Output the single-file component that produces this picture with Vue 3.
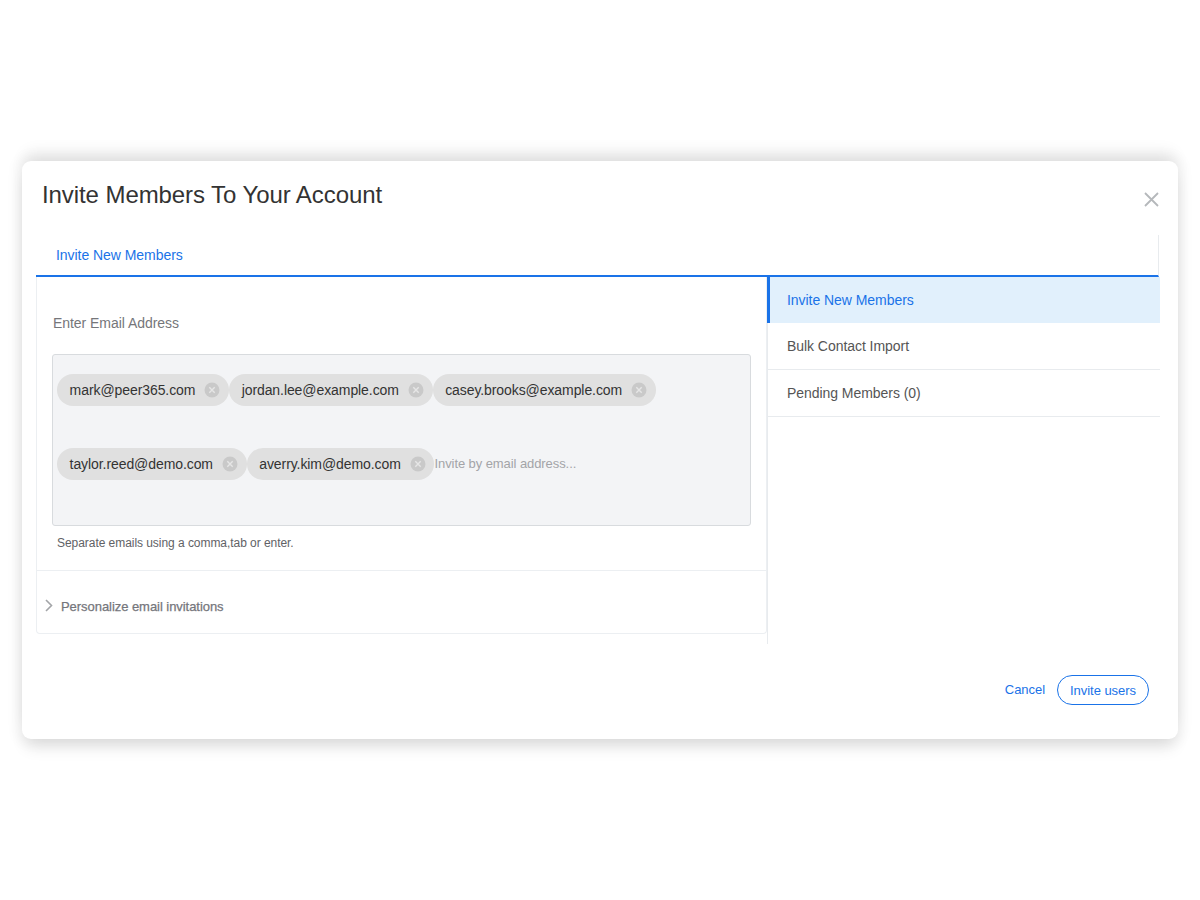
<script setup>
const emails = ['mark@peer365.com', 'jordan.lee@example.com', 'casey.brooks@example.com', 'taylor.reed@demo.com', 'averry.kim@demo.com']
const menu = [
  { label: 'Invite New Members', active: true },
  { label: 'Bulk Contact Import', active: false },
  { label: 'Pending Members (0)', active: false }
]
</script>

<template>
  <div class="page">
    <section class="modal">
      <header class="head">
        <h1 class="title">Invite Members To Your Account</h1>
        <svg class="close" width="15" height="15" viewBox="0 0 15 15" aria-hidden="true">
          <path d="M1 1 L14 14 M14 1 L1 14" fill="none" stroke="#b5b8bb" stroke-width="1.8" />
        </svg>
      </header>

      <div class="tabs">
        <span class="tab">Invite New Members</span>
      </div>

      <div class="columns">
        <div class="left">
          <div class="form">
            <div class="label">Enter Email Address</div>
            <div class="box">
              <span v-for="e in emails" :key="e" class="chip">
                <span class="chip-text">{{ e }}</span>
                <svg class="chip-x" width="16" height="16" viewBox="0 0 16 16" aria-hidden="true">
                  <circle cx="8" cy="8" r="7.5" fill="#c9c9c9" />
                  <path d="M5.3 5.3 L10.7 10.7 M10.7 5.3 L5.3 10.7" stroke="#e6e6e6" stroke-width="1.4" fill="none" />
                </svg>
              </span>
              <span class="placeholder">Invite by email address...</span>
            </div>
            <div class="hint">Separate emails using a comma,tab or enter.</div>
          </div>
          <div class="personalize">
            <svg class="chev" width="8" height="13" viewBox="0 0 8 13" aria-hidden="true">
              <path d="M1 1 L6.5 6.5 L1 12" fill="none" stroke="#a3a5a8" stroke-width="1.6" />
            </svg>
            <span>Personalize email invitations</span>
          </div>
        </div>

        <nav class="side">
          <div v-for="m in menu" :key="m.label" class="item" :class="{ active: m.active }">{{ m.label }}</div>
        </nav>
      </div>

      <footer class="foot">
        <span class="cancel">Cancel</span>
        <span class="invite">Invite users</span>
      </footer>
    </section>
  </div>
</template>

<style>
html, body { margin: 0; background: #fff; }
</style>

<style scoped>
.page {
  width: 1200px;
  height: 900px;
  padding: 161px 22px;
  box-sizing: border-box;
  font-family: "Liberation Sans", Arial, sans-serif;
  letter-spacing: -0.05px;
  background: #fff;
}
.modal {
  height: 578px;
  background: #fff;
  border-radius: 9px;
  box-shadow: 0 -12px 16px -4px rgba(0, 0, 0, 0.09), 0 12px 16px -4px rgba(0, 0, 0, 0.11), 0 0 12px 6px rgba(0, 0, 0, 0.045);
  padding: 0 19px 0 14px;
  box-sizing: border-box;
  display: flex;
  flex-direction: column;
}
.head {
  height: 74px;
  display: flex;
  justify-content: space-between;
  padding: 0 0 0 6px;
  flex: none;
}
.title {
  margin: 20px 0 0;
  font-size: 24px;
  line-height: 27px;
  font-weight: 400;
  letter-spacing: -0.08px;
  color: #333;
}
.close {
  margin: 31px 0 0 0;
}
.tabs {
  height: 42px;
  flex: none;
  box-sizing: border-box;
  border-bottom: 2px solid #1a73e8;
  border-right: 1px solid #e8ebee;
  padding: 11px 0 0 20px;
}
.tab {
  font-size: 14px;
  line-height: 18px;
  color: #1a73e8;
}
.columns {
  display: flex;
  height: 367px;
  flex: none;
}
.left {
  width: 731px;
  height: 357px;
  box-sizing: border-box;
  border: 1px solid #eceff2;
  border-top: none;
  border-radius: 0 0 4px 4px;
  flex: none;
}
.form {
  height: 294px;
  box-sizing: border-box;
  padding: 37px 15px 0;
  border-bottom: 1px solid #eceff2;
}
.label {
  font-size: 14px;
  line-height: 18px;
  padding-left: 1px;
  color: #75767a;
}
.box {
  margin-top: 22px;
  height: 172px;
  box-sizing: border-box;
  background: #f3f4f6;
  border: 1px solid #d8dbde;
  border-radius: 3px;
  padding: 19px 4px 0;
  display: flex;
  flex-wrap: wrap;
  align-content: flex-start;
  align-items: center;
  row-gap: 42px;
}
.chip {
  height: 32px;
  border-radius: 16px;
  background: #e0e0e0;
  display: inline-flex;
  align-items: center;
  padding: 0 8.7px 0 12.6px;
  font-size: 14px;
  letter-spacing: -0.08px;
  color: #333;
  white-space: nowrap;
}
.chip-x {
  margin-left: 9px;
}
.placeholder {
  font-size: 13px;
  letter-spacing: -0.08px;
  margin-top: -2px;
  color: #a3a4a8;
}
.hint {
  margin: 9px 0 0 5px;
  font-size: 12px;
  line-height: 16px;
  color: #616266;
}
.personalize {
  display: flex;
  align-items: center;
  height: 61px;
  padding: 9px 0 0 8px;
  box-sizing: border-box;
  font-size: 13px;
  color: #75767c;
  -webkit-text-stroke: 0.25px #75767c;
}
.chev {
  margin-right: 8px;
  margin-top: -2px;
}
.side {
  flex: 1;
  margin-right: -1px;
  border-left: 1px solid #e8ebee;
}
.item {
  height: 47px;
  box-sizing: border-box;
  border-bottom: 1px solid #e8ebee;
  padding: 0 0 0 19px;
  display: flex;
  align-items: center;
  font-size: 14px;
  color: #555;
}
.item.active {
  height: 46px;
  margin-left: -1px;
  border-left: 3px solid #1a73e8;
  border-bottom: none;
  background: #e1f0fc;
  color: #1a73e8;
  padding-left: 17px;
}
.foot {
  display: flex;
  justify-content: flex-end;
  align-items: center;
  padding: 31px 10px 0 0;
  color: #1a73e8;
}
.cancel {
  margin-right: 12px;
  margin-top: -2px;
  font-size: 13px;
}
.invite {
  height: 30px;
  width: 92px;
  box-sizing: border-box;
  border: 1px solid #1a73e8;
  border-radius: 15px;
  display: flex;
  align-items: center;
  justify-content: center;
  font-size: 13px;
}
</style>
